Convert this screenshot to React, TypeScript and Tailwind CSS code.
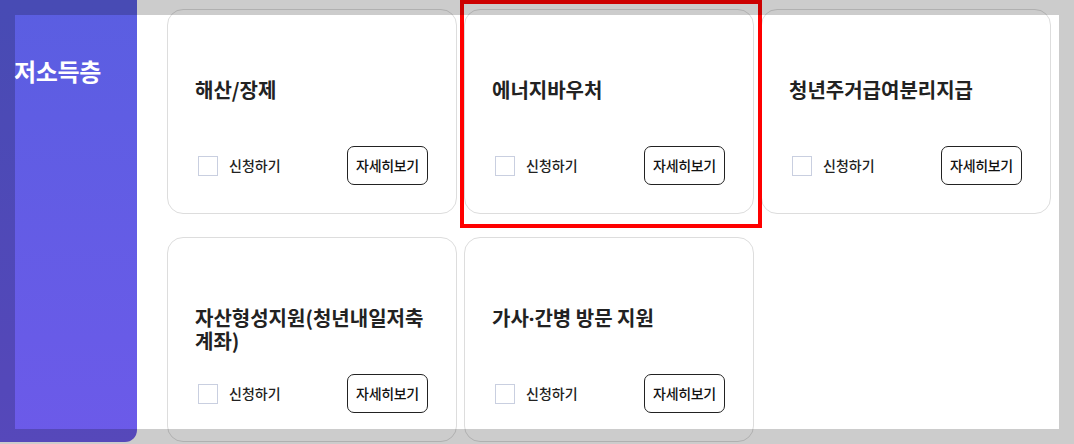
const programs = [
  { id: 1, title: "해산/장제" },
  { id: 2, title: "에너지바우처" },
  { id: 3, title: "청년주거급여분리지급" },
  { id: 4, title: "자산형성지원(청년내일저축계좌)" },
  { id: 5, title: "가사·간병 방문 지원" },
];

// the CJK font draws "·" full width; the reference shows a narrow dot
function Title({ text }: { text: string }) {
  const parts = text.split("·");
  return (
    <>
      {parts.map((part, i) => (
        <span key={i}>
          {i > 0 && <span className="font-['Noto_Sans']">·</span>}
          {part}
        </span>
      ))}
    </>
  );
}

function ProgramCard({ title }: { title: string }) {
  return (
    <div className="flex h-[205px] flex-col rounded-[16px] border border-[#dddddd] bg-white pl-[27px] pr-[28px] pt-[68px]">
      <div className="h-[68px] text-[20px] font-bold leading-[23px] text-[#222222] break-all">
        <Title text={title} />
      </div>
      <div className="flex h-[39px] items-center justify-between">
        <label className="ml-[3px] flex items-center gap-[11px]">
          <span className="block h-[20px] w-[20px] border border-[#c9cfe0] bg-white" />
          <span className="text-[14px] font-medium text-[#222222]">신청하기</span>
        </label>
        <button className="flex h-[39px] w-[81px] items-center justify-center rounded-[7px] border border-[#222222] bg-white text-[14px] font-medium tracking-[-0.3px] text-[#111111]">
          자세히보기
        </button>
      </div>
    </div>
  );
}

export default function App() {
  return (
    <div
      className="relative h-[444px] w-[1074px] overflow-hidden bg-white"
      style={{ fontFamily: '"Noto Sans CJK KR", "Noto Sans", sans-serif' }}
    >
      <div className="flex">
        {/* Category sidebar */}
        <aside className="h-[442px] w-[137px] shrink-0 rounded-br-[12px] bg-gradient-to-b from-[#5a5ee1] to-[#6c5ae9] pl-[14px] pt-[55px]">
          <h2 className="text-[24px] font-bold leading-[32px] tracking-[-0.3px] text-white">저소득층</h2>
        </aside>

        {/* Program cards */}
        <div className="grid w-[914px] grid-cols-[290px_290px_290px] gap-x-[7px] gap-y-[23px] pl-[30px] pt-[9px]">
          {programs.map((p) => (
            <ProgramCard key={p.id} title={p.title} />
          ))}
        </div>
      </div>

      {/* Highlight box */}
      <div className="pointer-events-none absolute left-[460px] top-0 h-[228px] w-[302px] border-4 border-[#ff0000]" />

      {/* Dim frame */}
      <div className="pointer-events-none absolute inset-0 border-[15px] border-black/20" />
    </div>
  );
}
